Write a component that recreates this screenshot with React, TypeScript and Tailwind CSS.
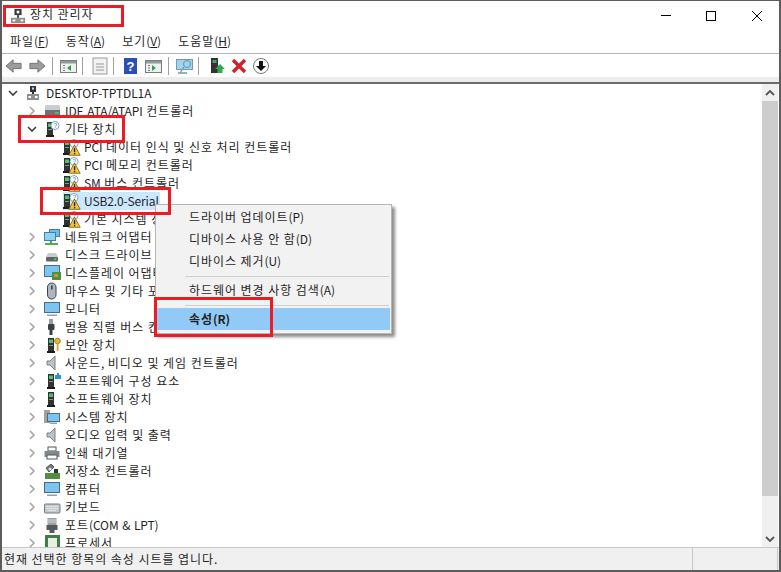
import React from "react";

const FONT = '"Noto Sans CJK KR","Liberation Sans",sans-serif';

function T({ children }: { children: string }) {
  const parts = children.split(/([\uAC00-\uD7A3 ]+)/);
  return (
    <>
      {parts.map((p, i) =>
        p === "" ? null : (
          <span key={i} className={i % 2 === 1 ? "tracking-[0.95px]" : "tracking-[-0.1px]"}>
            {p}
          </span>
        )
      )}
    </>
  );
}

function Tower({ x = 0 }: { x?: number }) {
  return (
    <g transform={`translate(${x} 0)`}>
      <rect x="4" y="2" width="6" height="13" fill="#2f3431" />
      <rect x="5" y="3.5" width="4" height="3.5" fill="#4fc06c" />
      <rect x="5" y="9" width="4" height="1" fill="#8d928f" />
      <rect x="3" y="15" width="8" height="2" fill="#1c1c1c" />
    </g>
  );
}

function Warn() {
  return (
    <g>
      <path d="M11.5 7 L17.2 17.3 L5.8 17.3 Z" fill="#f6c531" stroke="#6f5a10" strokeWidth="0.8" />
      <rect x="10.9" y="10.2" width="1.3" height="4" fill="#1d1d1d" />
      <rect x="10.9" y="15" width="1.3" height="1.3" fill="#1d1d1d" />
    </g>
  );
}

function Question() {
  return (
    <g>
      <circle cx="11" cy="5.5" r="4" fill="#fff" stroke="#7ea6c8" />
      <text x="9.4" y="8" fontSize="6.5" fill="#3a78b5" fontFamily="Liberation Sans">?</text>
    </g>
  );
}

function DevIcon({ kind }: { kind: string }) {
  const c = "w-[18px] h-[18px] shrink-0";
  const screen = (
    <>
      <rect x="0.5" y="2.5" width="15" height="10" fill="#7cc4f2" stroke="#4a6d86" strokeWidth="1" />
      <rect x="3" y="14.5" width="10" height="1.5" fill="#8aa4b5" />
    </>
  );
  let body: React.ReactNode = null;
  switch (kind) {
    case "computer":
      body = (
        <>
          <rect x="5" y="2" width="6" height="6" fill="#333" />
          <rect x="7" y="3.5" width="2" height="2" fill="#ddd" />
          <rect x="7" y="8" width="2" height="2" fill="#333" />
          <rect x="2" y="10" width="12" height="6" fill="#8f8f8f" />
          <rect x="3.5" y="12" width="2.5" height="2" fill="#fff" />
          <rect x="10" y="12" width="2.5" height="2" fill="#fff" />
        </>
      );
      break;
    case "ide":
      body = (
        <>
          <rect x="1" y="3" width="15" height="12" rx="1.5" fill="#c9cdcf" />
          <rect x="1" y="8" width="15" height="7" fill="#6d7274" />
          <rect x="11" y="10" width="4" height="2" fill="#46c35f" />
        </>
      );
      break;
    case "other":
      body = (<><Tower x={-1} /><Question /></>);
      break;
    case "warn":
      body = (<><Tower x={-3} /><Question /><Warn /></>);
      break;
    case "network":
      body = (
        <>
          <rect x="5.5" y="1.5" width="10" height="7" fill="#72bbe8" stroke="#3f7fa8" />
          <rect x="0.5" y="4.5" width="11" height="8" fill="#8fd0f5" stroke="#3f7fa8" />
          <rect x="1" y="15" width="13" height="2" fill="#4fb04f" />
          <rect x="6" y="13" width="2" height="2" fill="#4fb04f" />
        </>
      );
      break;
    case "disk":
      body = (
        <>
          <path d="M4 7 H12 L14 11 H2 Z" fill="#c8cccc" />
          <rect x="2" y="11" width="12" height="4.5" rx="1" fill="#5f6466" />
          <rect x="10" y="12.5" width="2.5" height="1.5" fill="#59d36b" />
        </>
      );
      break;
    case "display":
      body = (
        <>
          <rect x="0.5" y="1.5" width="15" height="11" fill="#7cc4f2" stroke="#4a6d86" />
          <rect x="8" y="8" width="9" height="8" fill="#4f8f3f" />
          <rect x="10" y="10" width="4" height="3" fill="#c09a35" />
        </>
      );
      break;
    case "mouse":
      body = (
        <>
          <rect x="3.5" y="1" width="8.5" height="16" rx="4.2" fill="#aeb7c0" stroke="#3c4248" />
          <rect x="7" y="3.5" width="1.6" height="4" fill="#3c4248" />
        </>
      );
      break;
    case "monitor":
      body = screen;
      break;
    case "usb":
      body = (
        <>
          <rect x="5" y="1" width="4" height="5" fill="#9a9fa2" />
          <rect x="4" y="6" width="6.5" height="6" rx="1" fill="#3d4144" />
          <path d="M7 12 V17" stroke="#3d4144" strokeWidth="3" />
        </>
      );
      break;
    case "security":
      body = (
        <>
          <Tower />
          <circle cx="13.5" cy="5" r="2.8" fill="#e6b53e" stroke="#a77f1f" />
          <rect x="12.7" y="7" width="1.8" height="8" fill="#d9a52f" />
        </>
      );
      break;
    case "sound":
    case "audio":
      body = (
        <>
          <path d="M3 7 H6 L11 2 V16 L6 11 H3 Z" fill="#bcc2c5" stroke="#7c8285" />
        </>
      );
      break;
    case "softcomp":
      body = (
        <>
          <Tower />
          <path d="M11 3 H13 V1 H15 V3 H17 V7 H11 Z" fill="#2d8fe0" />
        </>
      );
      break;
    case "softdev":
      body = <Tower />;
      break;
    case "system":
      body = (
        <>
          <rect x="0" y="2" width="6" height="13" fill="#a2a29a" />
          <rect x="3.5" y="5.5" width="12" height="8" fill="#7cc4f2" stroke="#4a6d86" />
          <rect x="6" y="14.5" width="7" height="1.5" fill="#8aa4b5" />
        </>
      );
      break;
    case "print":
      body = (
        <>
          <rect x="4" y="3" width="8" height="4" fill="#fff" stroke="#555" />
          <rect x="0.5" y="7" width="15" height="6" fill="#7d8a92" />
          <rect x="3" y="11" width="10" height="4" fill="#fff" stroke="#555" />
        </>
      );
      break;
    case "storage":
      body = (
        <>
          <path d="M2 6 L7 2 L10 5 L5 10 Z" fill="#6f7a72" stroke="#333" strokeWidth="0.7" />
          <circle cx="6" cy="7" r="1.5" fill="#e6e6e6" />
          <rect x="1" y="11" width="15" height="6" fill="#4f8f3f" />
          <rect x="10" y="7" width="4" height="4" fill="#333" />
        </>
      );
      break;
    case "pc":
      body = screen;
      break;
    case "keyboard":
      body = (
        <>
          <rect x="0.5" y="6" width="15.5" height="9" rx="1" fill="#c3c8cc" stroke="#757b80" />
          <path d="M2.5 8.5 H14 M2.5 10.5 H14 M4.5 12.5 H12" stroke="#f3f3f3" strokeWidth="1" strokeDasharray="1.3 .7" />
        </>
      );
      break;
    case "port":
      body = (
        <>
          <rect x="3.5" y="2" width="9" height="7" fill="#9a9ea0" />
          <path d="M5 3 V7 M7 3 V7 M9 3 V7 M11 3 V7" stroke="#e8e8e8" strokeWidth="0.8" />
          <rect x="2.5" y="9" width="11" height="5" fill="#55595b" />
          <rect x="5.5" y="14" width="5" height="3" fill="#55595b" />
        </>
      );
      break;
    case "cpu":
      body = (
        <>
          <rect x="1" y="1" width="15" height="15" fill="#3f7f45" />
          <rect x="4" y="4" width="9" height="9" fill="#e9efe2" />
        </>
      );
      break;
  }
  return (
    <svg className={c} viewBox="0 0 18 18" aria-hidden="true">
      {body}
    </svg>
  );
}

function Chevron({ open }: { open?: boolean }) {
  return (
    <svg className="w-[14px] h-[14px] shrink-0" viewBox="0 0 14 14" fill="none" aria-hidden="true">
      {open ? (
        <path d="M3 5 L7 9 L11 5" stroke="#404040" strokeWidth="1.6" />
      ) : (
        <path d="M5 3 L9 7 L5 11" stroke="#a6a6a6" strokeWidth="1.6" />
      )}
    </svg>
  );
}

function Row({ label, kind, indent = 1, open, selected, nochev }: { label: string; kind: string; indent?: number; open?: boolean; selected?: boolean; nochev?: boolean }) {
  const pad = indent === 0 ? "pl-[3px]" : indent === 1 ? "pl-[22px]" : "pl-[60px]";
  return (
    <div className={`h-[18px] flex items-center ${pad}`}>
      {!nochev && <Chevron open={open} />}
      <div className={`flex items-center h-[18px] ${nochev ? "" : "ml-[5px]"} ${selected ? "bg-[#cce8ff]" : ""}`}>
        <DevIcon kind={kind} />
        <span className="ml-[2px] px-[1px] h-[18px] leading-[18px] whitespace-nowrap text-[#1f1f1f]">
          <T>{label}</T>
        </span>
      </div>
    </div>
  );
}

function Sep({ className }: { className: string }) {
  return <div className={`w-px h-[18px] bg-[#a0a0a0] ${className}`} />;
}

function Arrow({ left, className }: { left?: boolean; className?: string }) {
  return (
    <svg className={`w-[18px] h-[16px] ${className ?? ""}`} viewBox="0 0 20 18" aria-hidden="true">
      <path d={left ? "M1 9 L9 2 V6 H18 V12 H9 V16 Z" : "M19 9 L11 2 V6 H2 V12 H11 V16 Z"} fill="#9c9c9c" stroke="#6c6c6c" />
    </svg>
  );
}

function Win({ right, className }: { right?: boolean; className: string }) {
  return (
    <svg className={`w-[17px] h-[18px] ${className}`} viewBox="0 0 17 18" aria-hidden="true">
      <rect x="0.5" y="3.5" width="16" height="12" fill="#eef0f0" stroke="#7c7c7c" />
      <rect x="1" y="4" width="15" height="2.5" fill="#8f9a9e" />
      <path d={right ? "M7 8 L11 11 L7 14 Z" : "M11 8 L7 11 L11 14 Z"} fill="#2f9e48" />
      <path d="M3 8.5 H5 M3 11 H5 M3 13.5 H5" stroke="#7c7c7c" />
    </svg>
  );
}

function MenuTop({ name, k }: { name: string; k: string }) {
  return (
    <span>
      <span className="tracking-[0.95px]">{name}</span>(<u>{k}</u>)
    </span>
  );
}

function Item({ label, bold }: { label: string; bold?: boolean }) {
  return (
    <div className={`h-[22px] flex items-center pl-[32px] whitespace-nowrap ${bold ? "font-bold bg-[#91c9f7]" : ""}`}>
      <span><T>{label}</T></span>
    </div>
  );
}

export default function App() {
  const rows: { label: string; kind: string }[] = [
    { label: "네트워크 어댑터", kind: "network" },
    { label: "디스크 드라이브", kind: "disk" },
    { label: "디스플레이 어댑터", kind: "display" },
    { label: "마우스 및 기타 포인팅 장치", kind: "mouse" },
    { label: "모니터", kind: "monitor" },
    { label: "범용 직렬 버스 컨트롤러", kind: "usb" },
    { label: "보안 장치", kind: "security" },
    { label: "사운드, 비디오 및 게임 컨트롤러", kind: "sound" },
    { label: "소프트웨어 구성 요소", kind: "softcomp" },
    { label: "소프트웨어 장치", kind: "softdev" },
    { label: "시스템 장치", kind: "system" },
    { label: "오디오 입력 및 출력", kind: "audio" },
    { label: "인쇄 대기열", kind: "print" },
    { label: "저장소 컨트롤러", kind: "storage" },
    { label: "컴퓨터", kind: "pc" },
    { label: "키보드", kind: "keyboard" },
    { label: "포트(COM & LPT)", kind: "port" },
    { label: "프로세서", kind: "cpu" },
  ];
  return (
    <div className="w-[781px] h-[572px] bg-white flex flex-col overflow-hidden relative text-[12px] text-[#1f1f1f] border-x-[2px] border-t border-b-[2px] border-[#5c5c5c] box-border" style={{ fontFamily: FONT }}>
      {/* title */}
      <div className="h-[29px] shrink-0 flex items-center pl-[8px] pr-[17px]">
        <svg className="w-[16px] h-[16px]" viewBox="0 0 18 18" aria-hidden="true">
          <rect x="5" y="1" width="8" height="7" fill="#3a3a3a" />
          <rect x="7.5" y="3" width="3" height="3" fill="#fff" />
          <rect x="8" y="8" width="2" height="4" fill="#3a3a3a" />
          <rect x="1" y="11" width="16" height="6" fill="#8f8f8f" />
          <rect x="3" y="13" width="3" height="2" fill="#fff" />
          <rect x="12" y="13" width="3" height="2" fill="#fff" />
        </svg>
        <span className="ml-[4px] mb-[3px]"><T>장치 관리자</T></span>
        <div className="ml-auto flex items-center">
          <div className="w-[10px] h-px bg-black" />
          <div className="ml-[35px] w-[10px] h-[10px] border border-black" />
          <svg className="ml-[36px] w-[10px] h-[10px]" viewBox="0 0 10 10" aria-hidden="true"><path d="M0 0 L10 10 M10 0 L0 10" stroke="#000" /></svg>
        </div>
      </div>
      {/* menu */}
      <div className="h-[24px] shrink-0 flex items-center pl-[8px] pb-[2px] gap-[17px] border-b border-[#b5b5b5]">
        <MenuTop name="파일" k="F" />
        <MenuTop name="동작" k="A" />
        <MenuTop name="보기" k="V" />
        <MenuTop name="도움말" k="H" />
      </div>
      {/* toolbar */}
      <div className="h-[23px] shrink-0 flex items-center pl-[3px]">
        <Arrow left />
        <Arrow className="ml-[5px]" />
        <Sep className="ml-[6px]" />
        <Win className="ml-[7px]" />
        <Sep className="ml-[5px]" />
        <svg className="ml-[8px] w-[18px] h-[18px]" viewBox="0 0 18 18" aria-hidden="true">
          <rect x="2" y="1" width="14" height="16" fill="#f2f2f2" stroke="#9a9a9a" />
          <path d="M5 7 H13 M5 10 H13 M5 13 H13" stroke="#9a9a9a" />
        </svg>
        <Sep className="ml-[4px]" />
        <svg className="ml-[8px] w-[18px] h-[18px]" viewBox="0 0 18 18" aria-hidden="true">
          <rect x="2" y="1" width="13" height="16" fill="#2a50b8" />
          <text x="4.5" y="14" fontSize="13" fontWeight="700" fill="#fff" fontFamily="Liberation Sans">?</text>
        </svg>
        <Win right className="ml-[5px]" />
        <Sep className="ml-[6px]" />
        <svg className="ml-[6px] w-[20px] h-[18px]" viewBox="0 0 20 18" aria-hidden="true">
          <rect x="1.5" y="2.5" width="16" height="10" fill="#9fd3f2" stroke="#7a98a8" />
          <circle cx="12" cy="7" r="3.5" fill="none" stroke="#6f8fa6" />
          <path d="M9 10 L5 16 M3 16 H12" stroke="#7a98a8" strokeWidth="1.3" />
        </svg>
        <Sep className="ml-[3px]" />
        <svg className="ml-[9px] w-[18px] h-[18px]" viewBox="0 0 18 18" aria-hidden="true">
          <rect x="3" y="1" width="7" height="15" fill="#333" />
          <rect x="4.5" y="3" width="4" height="3" fill="#3fae5c" />
          <path d="M12 7 L17 12 H14.5 V16 H9.5 V12 H7 Z" fill="#2fa84f" />
        </svg>
        <svg className="ml-[4px] w-[18px] h-[18px]" viewBox="0 0 18 18" aria-hidden="true">
          <path d="M3 3 L15 15 M15 3 L3 15" stroke="#d5202a" strokeWidth="3.4" />
        </svg>
        <svg className="ml-[4px] w-[18px] h-[18px]" viewBox="0 0 18 18" aria-hidden="true">
          <circle cx="9" cy="9" r="7.5" fill="#fff" stroke="#777" />
          <path d="M7 4 H11 V9 H14 L9 14 L4 9 H7 Z" fill="#111" />
        </svg>
      </div>
      {/* tree pane */}
      <div className="flex-1 min-h-0 flex flex-col">
        <div className="h-[7px] shrink-0 bg-[#ededed] border-b-[2px] border-[#6a6a6a]" />
        <div className="flex-1 min-h-0 flex">
          <div className="flex-1 min-w-0 overflow-hidden pl-[1px]">
            <Row label="DESKTOP-TPTDL1A" kind="computer" indent={0} open />
            <Row label="IDE ATA/ATAPI 컨트롤러" kind="ide" />
            <Row label="기타 장치" kind="other" open />
            <Row label="PCI 데이터 인식 및 신호 처리 컨트롤러" kind="warn" indent={2} nochev />
            <Row label="PCI 메모리 컨트롤러" kind="warn" indent={2} nochev />
            <Row label="SM 버스 컨트롤러" kind="warn" indent={2} nochev />
            <Row label="USB2.0-Serial" kind="warn" indent={2} nochev selected />
            <Row label="기본 시스템 장치" kind="warn" indent={2} nochev />
            {rows.map((r) => (
              <Row key={r.label} label={r.label} kind={r.kind} />
            ))}
          </div>
          <div className="w-[16px] shrink-0 mr-[1px] bg-[#f0f0f0] flex flex-col relative">
            <div className="h-[17px] flex items-center justify-center">
              <svg className="w-[10px] h-[8px]" viewBox="0 0 10 8" aria-hidden="true"><path d="M1 6 L5 2 L9 6" fill="none" stroke="#555" strokeWidth="1.8" /></svg>
            </div>
            <div className="h-[395px] bg-[#cdcdcd]" />
            <div className="mt-auto h-[17px] flex items-center justify-center">
              <svg className="w-[10px] h-[8px]" viewBox="0 0 10 8" aria-hidden="true"><path d="M1 2 L5 6 L9 2" fill="none" stroke="#555" strokeWidth="1.8" /></svg>
            </div>
          </div>
        </div>
      </div>
      {/* status */}
      <div className="h-[23px] shrink-0 flex bg-[#f0f0f0] border-t border-[#c8c8c8]">
        <div className="flex-1 flex items-center pl-[2px] whitespace-nowrap"><span><T>현재 선택한 항목의 속성 시트를 엽니다.</T></span></div>
        <div className="w-[85px] border-l border-[#c8c8c8]" />
        <div className="w-[2px] border-l border-[#c8c8c8]" />
      </div>

      {/* context menu */}
      <div className="absolute left-[153px] top-[203px] w-[237px] h-[130px] bg-[#f2f2f2] border border-[#b5b5b5] shadow-[3px_3px_3px_rgba(0,0,0,0.45)] px-[1px] pt-[1px]">
        <Item label="드라이버 업데이트(P)" />
        <Item label="디바이스 사용 안 함(D)" />
        <Item label="디바이스 제거(U)" />
        <div className="h-px bg-[#d0d0d0] mt-[4px] mb-[2px] ml-[28px] mr-[1px]" />
        <Item label="하드웨어 변경 사항 검색(A)" />
        <div className="h-px bg-[#d0d0d0] mt-[4px] mb-[2px] ml-[28px] mr-[1px]" />
        <Item label="속성(R)" bold />
      </div>

      {/* red annotations */}
      <div className="absolute left-[1px] top-[4px] w-[121px] h-[22px] border-[3px] border-[#ed1c24]" />
      <div className="absolute left-[16px] top-[114px] w-[107px] h-[28px] border-[3px] border-[#ed1c24]" />
      <div className="absolute left-[38px] top-[186px] w-[131px] h-[28px] border-[3px] border-[#ed1c24]" />
      <div className="absolute left-[152px] top-[296px] w-[119px] h-[40px] border-[3px] border-[#ed1c24]" />
    </div>
  );
}
